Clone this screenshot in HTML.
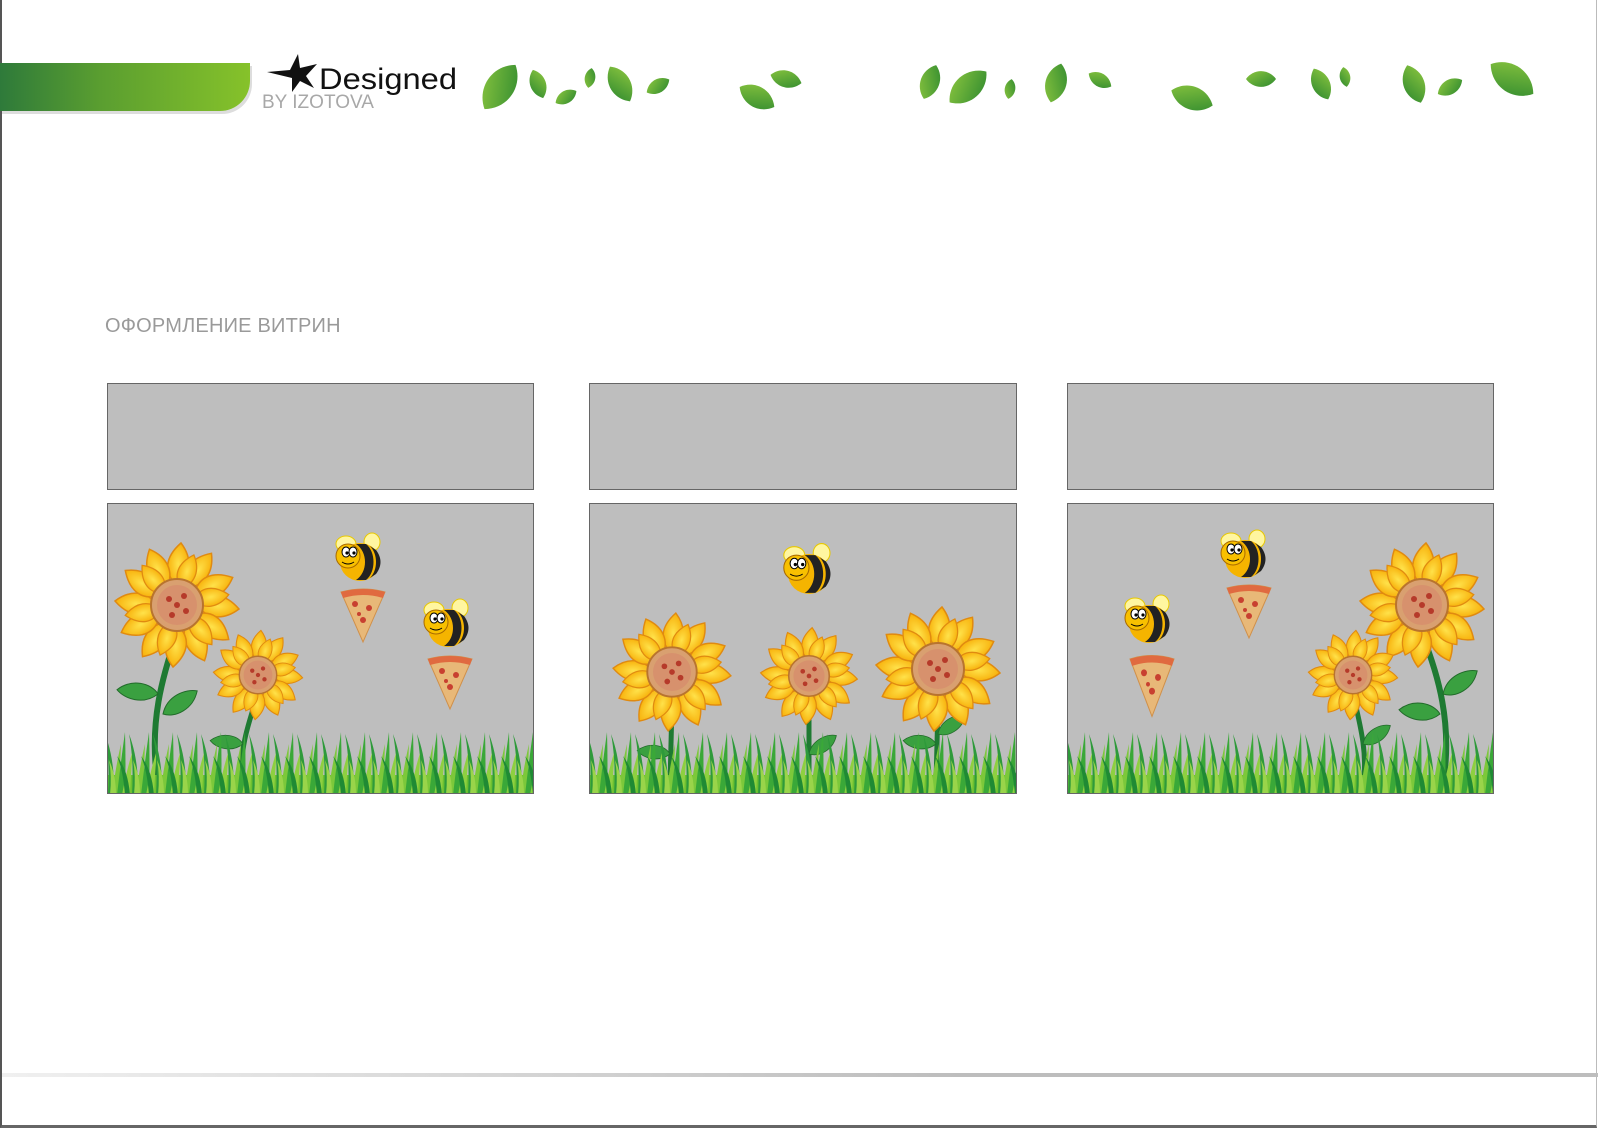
<!DOCTYPE html>
<html><head><meta charset="utf-8"><style>
html,body{margin:0;padding:0}
body{width:1600px;height:1131px;position:relative;background:#fff;overflow:hidden;font-family:"Liberation Sans",sans-serif}
.frame{position:absolute;left:0;top:0;width:1597px;height:1128px;border-left:2px solid #555;border-bottom:3px solid #666;border-right:1px solid #bbb;box-sizing:border-box}
.bar{position:absolute;left:0;top:63px;width:250px;height:48px;background:linear-gradient(90deg,#2e7a3a,#5a9e30 40%,#86c22a);border-bottom-right-radius:30px;box-shadow:2px 3px 0 #ddd}
.box{position:absolute;background:#bebebe;border:1px solid #666;box-sizing:border-box}
.title{position:absolute;left:105px;top:315px;font-size:20px;color:#9a9a9a;letter-spacing:0.2px}
.foot{position:absolute;left:2px;top:1073px;width:1596px;height:4px;background:linear-gradient(90deg,#f0f0f0,#bdbdbd 60%,#bdbdbd)}
</style></head><body>
<div class="frame"></div>
<div class="bar"></div>
<svg style="position:absolute;left:262px;top:52px" width="210" height="60">
<path d="M5,20 L28,18 L36,2 L38,16 L55,12 L44,24 L52,36 L38,29 L30,40 L30,26 Z" fill="#111"/>
<text x="57" y="37" font-family="Liberation Sans" font-size="30" fill="#111" textLength="138" lengthAdjust="spacingAndGlyphs">Designed</text>
<text x="0" y="56" font-family="Liberation Sans" font-size="19" fill="#a8a8a8">BY IZOTOVA</text>
</svg>
<svg style="position:absolute;left:0;top:0" width="1600" height="130">
<defs><linearGradient id="lg" x1="0" y1="0" x2="1" y2="1"><stop offset="0" stop-color="#8cc63f"/><stop offset="1" stop-color="#2f8a2f"/></linearGradient>
<path id="leaf" d="M-20,0 C-10,-14 10,-14 20,0 C10,14 -10,14 -20,0Z" fill="url(#lg)"/></defs>
<g>
<use href="#leaf" transform="translate(500,87) rotate(-55) scale(1.35)"/>
<use href="#leaf" transform="translate(538,84) rotate(70) scale(0.75)"/>
<use href="#leaf" transform="translate(566,97) rotate(-30) scale(0.6)"/>
<use href="#leaf" transform="translate(590,78) rotate(-80) scale(0.5)"/>
<use href="#leaf" transform="translate(620,84) rotate(60) scale(1)"/>
<use href="#leaf" transform="translate(658,86) rotate(-30) scale(0.65)"/>
<use href="#leaf" transform="translate(757,97) rotate(30) scale(1)"/>
<use href="#leaf" transform="translate(786,79) rotate(15) scale(0.8)"/>
<use href="#leaf" transform="translate(930,82) rotate(-70) scale(0.9)"/>
<use href="#leaf" transform="translate(968,87) rotate(-40) scale(1.2)"/>
<use href="#leaf" transform="translate(1010,89) rotate(-80) scale(0.5)"/>
<use href="#leaf" transform="translate(1056,83) rotate(-75) scale(1)"/>
<use href="#leaf" transform="translate(1100,80) rotate(30) scale(0.65)"/>
<use href="#leaf" transform="translate(1192,98) rotate(20) scale(1.1)"/>
<use href="#leaf" transform="translate(1261,79) rotate(0) scale(0.75)"/>
<use href="#leaf" transform="translate(1321,84) rotate(65) scale(0.85)"/>
<use href="#leaf" transform="translate(1345,77) rotate(80) scale(0.5)"/>
<use href="#leaf" transform="translate(1414,84) rotate(70) scale(1)"/>
<use href="#leaf" transform="translate(1450,87) rotate(-30) scale(0.7)"/>
<use href="#leaf" transform="translate(1512,79) rotate(35) scale(1.3)"/>
</g></svg>
<div class="title">ОФОРМЛЕНИЕ ВИТРИН</div>
<div class="box" style="left:107px;top:383px;width:427px;height:107px"></div>
<div class="box" style="left:589px;top:383px;width:428px;height:107px"></div>
<div class="box" style="left:1067px;top:383px;width:427px;height:107px"></div>

<svg width="0" height="0" style="position:absolute">
<defs>
<radialGradient id="pg" cx="0.5" cy="0.5" r="0.6"><stop offset="0" stop-color="#ffe24a"/><stop offset="1" stop-color="#f6a800"/></radialGradient>
<path id="petal" d="M0,-20 C14,-30 16,-46 4,-62 C-12,-48 -14,-32 0,-20Z" fill="url(#pg)" stroke="#e08a10" stroke-width="1.5"/>
<g id="sf">
<use href="#petal" transform="rotate(0)"/><use href="#petal" transform="rotate(30)"/><use href="#petal" transform="rotate(60)"/><use href="#petal" transform="rotate(90)"/><use href="#petal" transform="rotate(120)"/><use href="#petal" transform="rotate(150)"/><use href="#petal" transform="rotate(180)"/><use href="#petal" transform="rotate(210)"/><use href="#petal" transform="rotate(240)"/><use href="#petal" transform="rotate(270)"/><use href="#petal" transform="rotate(300)"/><use href="#petal" transform="rotate(330)"/>
<use href="#petal" transform="rotate(15) scale(0.85)"/><use href="#petal" transform="rotate(75) scale(0.85)"/><use href="#petal" transform="rotate(135) scale(0.85)"/><use href="#petal" transform="rotate(195) scale(0.85)"/><use href="#petal" transform="rotate(255) scale(0.85)"/><use href="#petal" transform="rotate(315) scale(0.85)"/>
<circle r="26" fill="#d9a070" stroke="#b8742e" stroke-width="2"/>
<circle r="20" fill="#d58a6c" opacity="0.7"/>
<circle cx="-8" cy="-6" r="3" fill="#b63a2a"/><circle cx="7" cy="-9" r="3" fill="#b63a2a"/><circle cx="9" cy="6" r="3" fill="#b63a2a"/><circle cx="-5" cy="10" r="3" fill="#b63a2a"/><circle cx="0" cy="0" r="3" fill="#b63a2a"/>
</g>
<g id="bee">
<ellipse cx="-14" cy="-18" rx="10" ry="8" fill="#fff6a0" stroke="#e8c800"/>
<ellipse cx="12" cy="-20" rx="8" ry="9" fill="#fff6a0" stroke="#e8c800"/>
<ellipse cx="0" cy="0" rx="20" ry="19" fill="#f5b400"/>
<path d="M-4,-18 C8,-10 8,10 -4,18 L6,18 C16,10 16,-10 6,-18Z" fill="#222"/>
<path d="M10,-16 C18,-8 18,8 10,16 L16,12 C22,4 22,-4 16,-12Z" fill="#222"/>
<circle cx="-12" cy="-6" r="12" fill="#f8c000" stroke="#a86a00"/>
<ellipse cx="-14" cy="-10" rx="4" ry="5" fill="#fff" stroke="#000"/><ellipse cx="-7" cy="-10" rx="4" ry="5" fill="#fff" stroke="#000"/>
<circle cx="-13" cy="-9" r="1.6"/><circle cx="-6" cy="-9" r="1.6"/>
<path d="M-18,0 Q-12,4 -6,0" stroke="#000" fill="none"/>
</g>
<g id="slice">
<path d="M-22,0 Q0,-6 22,0 L0,50Z" fill="#e8b878" stroke="#d0904a"/>
<path d="M-22,0 Q0,-6 22,0 L20,6 Q0,0 -20,6Z" fill="#e06a40"/>
<circle cx="-8" cy="12" r="3" fill="#c84030"/><circle cx="6" cy="16" r="3" fill="#c84030"/><circle cx="0" cy="28" r="3" fill="#c84030"/><circle cx="-4" cy="22" r="2" fill="#c84030"/>
</g>
<pattern id="grass" x="0" y="226" width="24" height="65" patternUnits="userSpaceOnUse">
<rect y="45" width="24" height="20" fill="#6cc030"/>
<path d="M0,65 Q2,30 -3,4 Q7,30 6,65Z" fill="#2e9a3a"/>
<path d="M24,65 Q26,30 21,4 Q31,30 30,65Z" fill="#2e9a3a"/>
<path d="M4,65 Q8,35 13,14 Q12,40 11,65Z" fill="#7cc83a"/>
<path d="M9,65 Q13,30 17,2 Q18,35 17,65Z" fill="#3aa838"/>
<path d="M14,65 Q19,38 25,20 Q23,42 22,65Z" fill="#8ed040"/>
<path d="M17,65 Q15,40 9,26 Q20,40 22,65Z" fill="#1f8a34"/>
<path d="M2,65 Q4,45 1,30 Q8,45 8,65Z" fill="#9ad44a"/>
</pattern>
<g id="leafs"><path d="M0,0 C10,-16 30,-16 40,-10 C30,6 10,8 0,0Z" fill="#3aa040" stroke="#226b2a"/></g>
</defs></svg>

<!-- panel 1 -->
<div class="box" style="left:107px;top:503px;width:427px;height:291px;overflow:hidden">
<svg width="427" height="291">
<path d="M69,130 C55,170 40,220 50,280" stroke="#1e7a32" stroke-width="6" fill="none"/>
<path d="M150,190 C140,220 130,250 135,280" stroke="#1e7a32" stroke-width="5" fill="none"/>
<use href="#leafs" transform="translate(50,190) rotate(200)"/>
<use href="#leafs" transform="translate(55,210) rotate(-20)"/>
<use href="#leafs" transform="translate(135,240) rotate(200) scale(0.8)"/>
<use href="#sf" transform="translate(69,101) scale(1)"/>
<use href="#sf" transform="translate(150,171) scale(0.72)"/>
<use href="#slice" transform="translate(255,88)"/>
<use href="#bee" transform="translate(252,58)"/>
<use href="#slice" transform="translate(342,155)"/>
<use href="#bee" transform="translate(340,124)"/>
<rect x="0" y="226" width="427" height="65" fill="url(#grass)"/>
</svg></div>
<!-- panel 2 -->
<div class="box" style="left:589px;top:503px;width:428px;height:291px;overflow:hidden">
<svg width="428" height="291">
<path d="M82,200 L80,280" stroke="#1e7a32" stroke-width="5"/>
<path d="M219,200 L219,280" stroke="#1e7a32" stroke-width="5"/>
<path d="M348,200 L346,280" stroke="#1e7a32" stroke-width="5"/>
<use href="#leafs" transform="translate(80,250) rotate(200) scale(0.8)"/>
<use href="#leafs" transform="translate(219,250) rotate(-20) scale(0.8)"/>
<use href="#leafs" transform="translate(346,240) rotate(200) scale(0.8)"/>
<use href="#leafs" transform="translate(348,230) rotate(-20) scale(0.8)"/>
<use href="#sf" transform="translate(82,168) scale(0.95)"/>
<use href="#sf" transform="translate(219,172) scale(0.78)"/>
<use href="#sf" transform="translate(348,165) scale(1)"/>
<use href="#bee" transform="translate(219,70) scale(1.05)"/>
<rect x="0" y="226" width="428" height="65" fill="url(#grass)"/>
</svg></div>
<!-- panel 3 -->
<div class="box" style="left:1067px;top:503px;width:427px;height:291px;overflow:hidden">
<svg width="427" height="291">
<path d="M354,130 C370,170 385,220 375,280" stroke="#1e7a32" stroke-width="6" fill="none"/>
<path d="M285,190 C292,220 300,250 295,280" stroke="#1e7a32" stroke-width="5" fill="none"/>
<use href="#leafs" transform="translate(375,190) rotate(-20)"/>
<use href="#leafs" transform="translate(372,210) rotate(200)"/>
<use href="#leafs" transform="translate(295,240) rotate(-20) scale(0.8)"/>
<use href="#sf" transform="translate(354,101)"/>
<use href="#sf" transform="translate(285,171) scale(0.72)"/>
<use href="#slice" transform="translate(84,155) scale(1,1.15)"/>
<use href="#bee" transform="translate(81,120)"/>
<use href="#slice" transform="translate(181,84)"/>
<use href="#bee" transform="translate(177,55)"/>
<rect x="0" y="226" width="427" height="65" fill="url(#grass)"/>
</svg></div>
<div class="foot"></div>
</body></html>
